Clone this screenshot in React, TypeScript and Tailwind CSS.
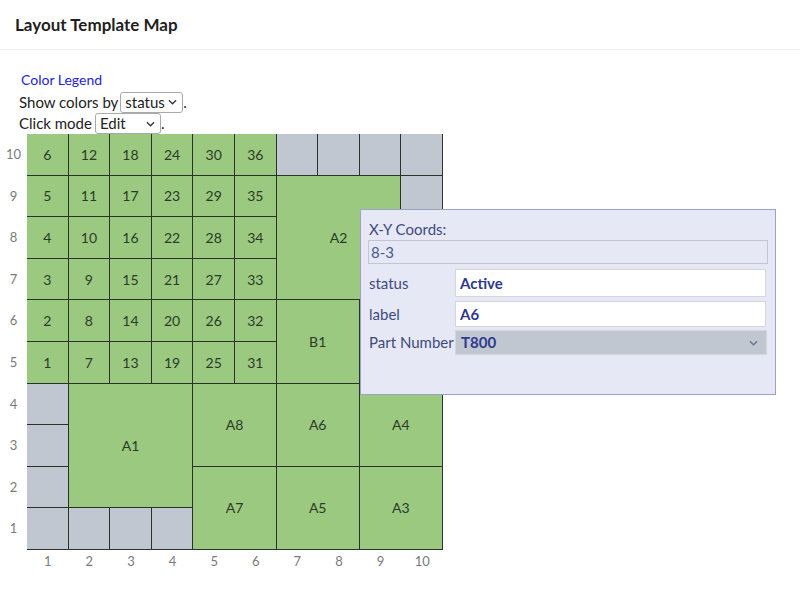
import React from 'react'

type Cell = {
  col: number
  row: number
  cs?: number
  rs?: number
  label?: string
  gray?: boolean
}

const colStart: Record<number, string> = {
  1: 'col-start-1',
  2: 'col-start-2',
  3: 'col-start-3',
  4: 'col-start-4',
  5: 'col-start-5',
  6: 'col-start-6',
  7: 'col-start-7',
  8: 'col-start-8',
  9: 'col-start-9',
  10: 'col-start-10',
}
const rowStart: Record<number, string> = {
  1: 'row-start-1',
  2: 'row-start-2',
  3: 'row-start-3',
  4: 'row-start-4',
  5: 'row-start-5',
  6: 'row-start-6',
  7: 'row-start-7',
  8: 'row-start-8',
  9: 'row-start-9',
  10: 'row-start-10',
}
const colSpan: Record<number, string> = { 1: 'col-span-1', 2: 'col-span-2', 3: 'col-span-3' }
const rowSpan: Record<number, string> = { 1: 'row-span-1', 2: 'row-span-2', 3: 'row-span-3' }

// grid rows are counted from the top; the axis label is 11 - row
const cells: Cell[] = []
for (let c = 1; c <= 6; c++) {
  for (let y = 5; y <= 10; y++) {
    cells.push({ col: c, row: 11 - y, label: String((c - 1) * 6 + (y - 4)) })
  }
}
for (let c = 7; c <= 10; c++) cells.push({ col: c, row: 1, gray: true })
cells.push({ col: 7, row: 2, cs: 3, rs: 3, label: 'A2' })
for (let r = 2; r <= 4; r++) cells.push({ col: 10, row: r, gray: true })
cells.push({ col: 7, row: 5, cs: 2, rs: 2, label: 'B1' })
for (let r = 5; r <= 6; r++) {
  cells.push({ col: 9, row: r, gray: true })
  cells.push({ col: 10, row: r, gray: true })
}
for (let r = 7; r <= 10; r++) cells.push({ col: 1, row: r, gray: true })
for (let c = 2; c <= 4; c++) cells.push({ col: c, row: 10, gray: true })
cells.push({ col: 2, row: 7, cs: 3, rs: 3, label: 'A1' })
cells.push({ col: 5, row: 7, cs: 2, rs: 2, label: 'A8' })
cells.push({ col: 7, row: 7, cs: 2, rs: 2, label: 'A6' })
cells.push({ col: 9, row: 7, cs: 2, rs: 2, label: 'A4' })
cells.push({ col: 5, row: 9, cs: 2, rs: 2, label: 'A7' })
cells.push({ col: 7, row: 9, cs: 2, rs: 2, label: 'A5' })
cells.push({ col: 9, row: 9, cs: 2, rs: 2, label: 'A3' })

function Chevron({ className }: { className?: string }) {
  return (
    <svg viewBox="0 0 10 6" className={className} fill="none" stroke="currentColor" strokeWidth="1.4">
      <path d="M1 1l4 4 4-4" />
    </svg>
  )
}

function FakeSelect({ value, width }: { value: string; width: string }) {
  return (
    <span
      className={`inline-flex items-center justify-between h-[21px] border border-[#a9a9a9] rounded-[3px] bg-white pl-[4px] pr-[5px] ${width}`}
    >
      <span>{value}</span>
      <Chevron className="w-[9px] h-[6px] text-[#333]" />
    </span>
  )
}

export default function App() {
  return (
    <div className="min-h-[589px] bg-white text-[#222] font-['Lato',sans-serif]">
      <div className="h-[50px] border-b border-[#f0f0f0] px-[15px] flex items-center">
        <h1 className="text-[17px] font-bold text-[#1f1f1f]">Layout Template Map</h1>
      </div>

      <div className="relative">
        <div className="pl-[19px] pt-[19px] text-[15px]">
          <div className="h-[22px] leading-[20px] pl-[2px]">
            <a className="text-[14px] text-[#2424d6]">Color Legend</a>
          </div>
          <div className="h-[22px] flex items-center">
            <span className="mr-[2px]">Show colors by</span>
            <FakeSelect value="status" width="w-[63px]" />
            <span>.</span>
          </div>
          <div className="h-[21px] flex items-center">
            <span className="mr-[3px]">Click mode</span>
            <FakeSelect value="Edit" width="w-[66px]" />
            <span>.</span>
          </div>
        </div>

        {/* map */}
        <div className="flex">
          <div className="w-[27px] flex flex-col">
            {[10, 9, 8, 7, 6, 5, 4, 3, 2, 1].map((n) => (
              <div key={n} className="h-[41.6px] flex items-center justify-center text-[13px] text-[#7a7a7a]">
                {n}
              </div>
            ))}
          </div>
          <div className="grid grid-cols-10 grid-rows-10 w-[416px] h-[416px]">
            {cells.map((c, i) => (
              <div
                key={i}
                className={`${colStart[c.col]} ${rowStart[c.row]} ${colSpan[c.cs ?? 1]} ${rowSpan[c.rs ?? 1]} border-r border-b border-[#2a332a] flex items-center justify-center text-[14px] text-[#2b3a2b] ${
                  c.gray ? 'bg-[#c0c7d1]' : 'bg-[#9bc97f]'
                }`}
              >
                {c.label}
              </div>
            ))}
          </div>
        </div>
        <div className="ml-[27px] w-[416px] grid grid-cols-10 h-[24px] items-center text-[13px] text-[#7a7a7a]">
          {[1, 2, 3, 4, 5, 6, 7, 8, 9, 10].map((n) => (
            <div key={n} className="text-center">
              {n}
            </div>
          ))}
        </div>

        {/* cell editor popup */}
        <div className="absolute left-[360px] top-[159px] w-[416px] h-[186px] bg-[#e6e8f5] border border-[#9aa2c6] px-[7px] pt-[9px] text-[15px] text-[#3d4a80]">
          <div className="leading-[20px] pl-[1px]">X-Y Coords:</div>
          <div className="mt-[1px] h-[24px] w-[400px] border border-[#c3c6d2] flex items-center px-[2px] text-[#4b5890]">
            8-3
          </div>
          <div className="mt-[5px] flex items-center h-[28px]">
            <div className="w-[87px] pl-[1px]">status</div>
            <div className="w-[311px] h-[28px] bg-white border border-[#d4d6de] flex items-center px-[4px] font-bold text-[#2e3a8c]">
              Active
            </div>
          </div>
          <div className="mt-[4px] flex items-center h-[26px]">
            <div className="w-[87px] pl-[1px]">label</div>
            <div className="w-[311px] h-[26px] bg-white border border-[#d4d6de] flex items-center px-[4px] font-bold text-[#2e3a8c]">
              A6
            </div>
          </div>
          <div className="mt-[3px] flex items-center h-[25px]">
            <div className="w-[87px] pl-[1px] whitespace-nowrap">Part Number</div>
            <div className="w-[312px] h-[25px] bg-[#c0c7d1] border border-[#d4d6de] flex items-center justify-between pl-[5px] pr-[8px] font-bold text-[#2e3a8c]">
              <span>T800</span>
              <Chevron className="w-[9px] h-[6px] text-[#6a7196]" />
            </div>
          </div>
        </div>
      </div>
    </div>
  )
}
